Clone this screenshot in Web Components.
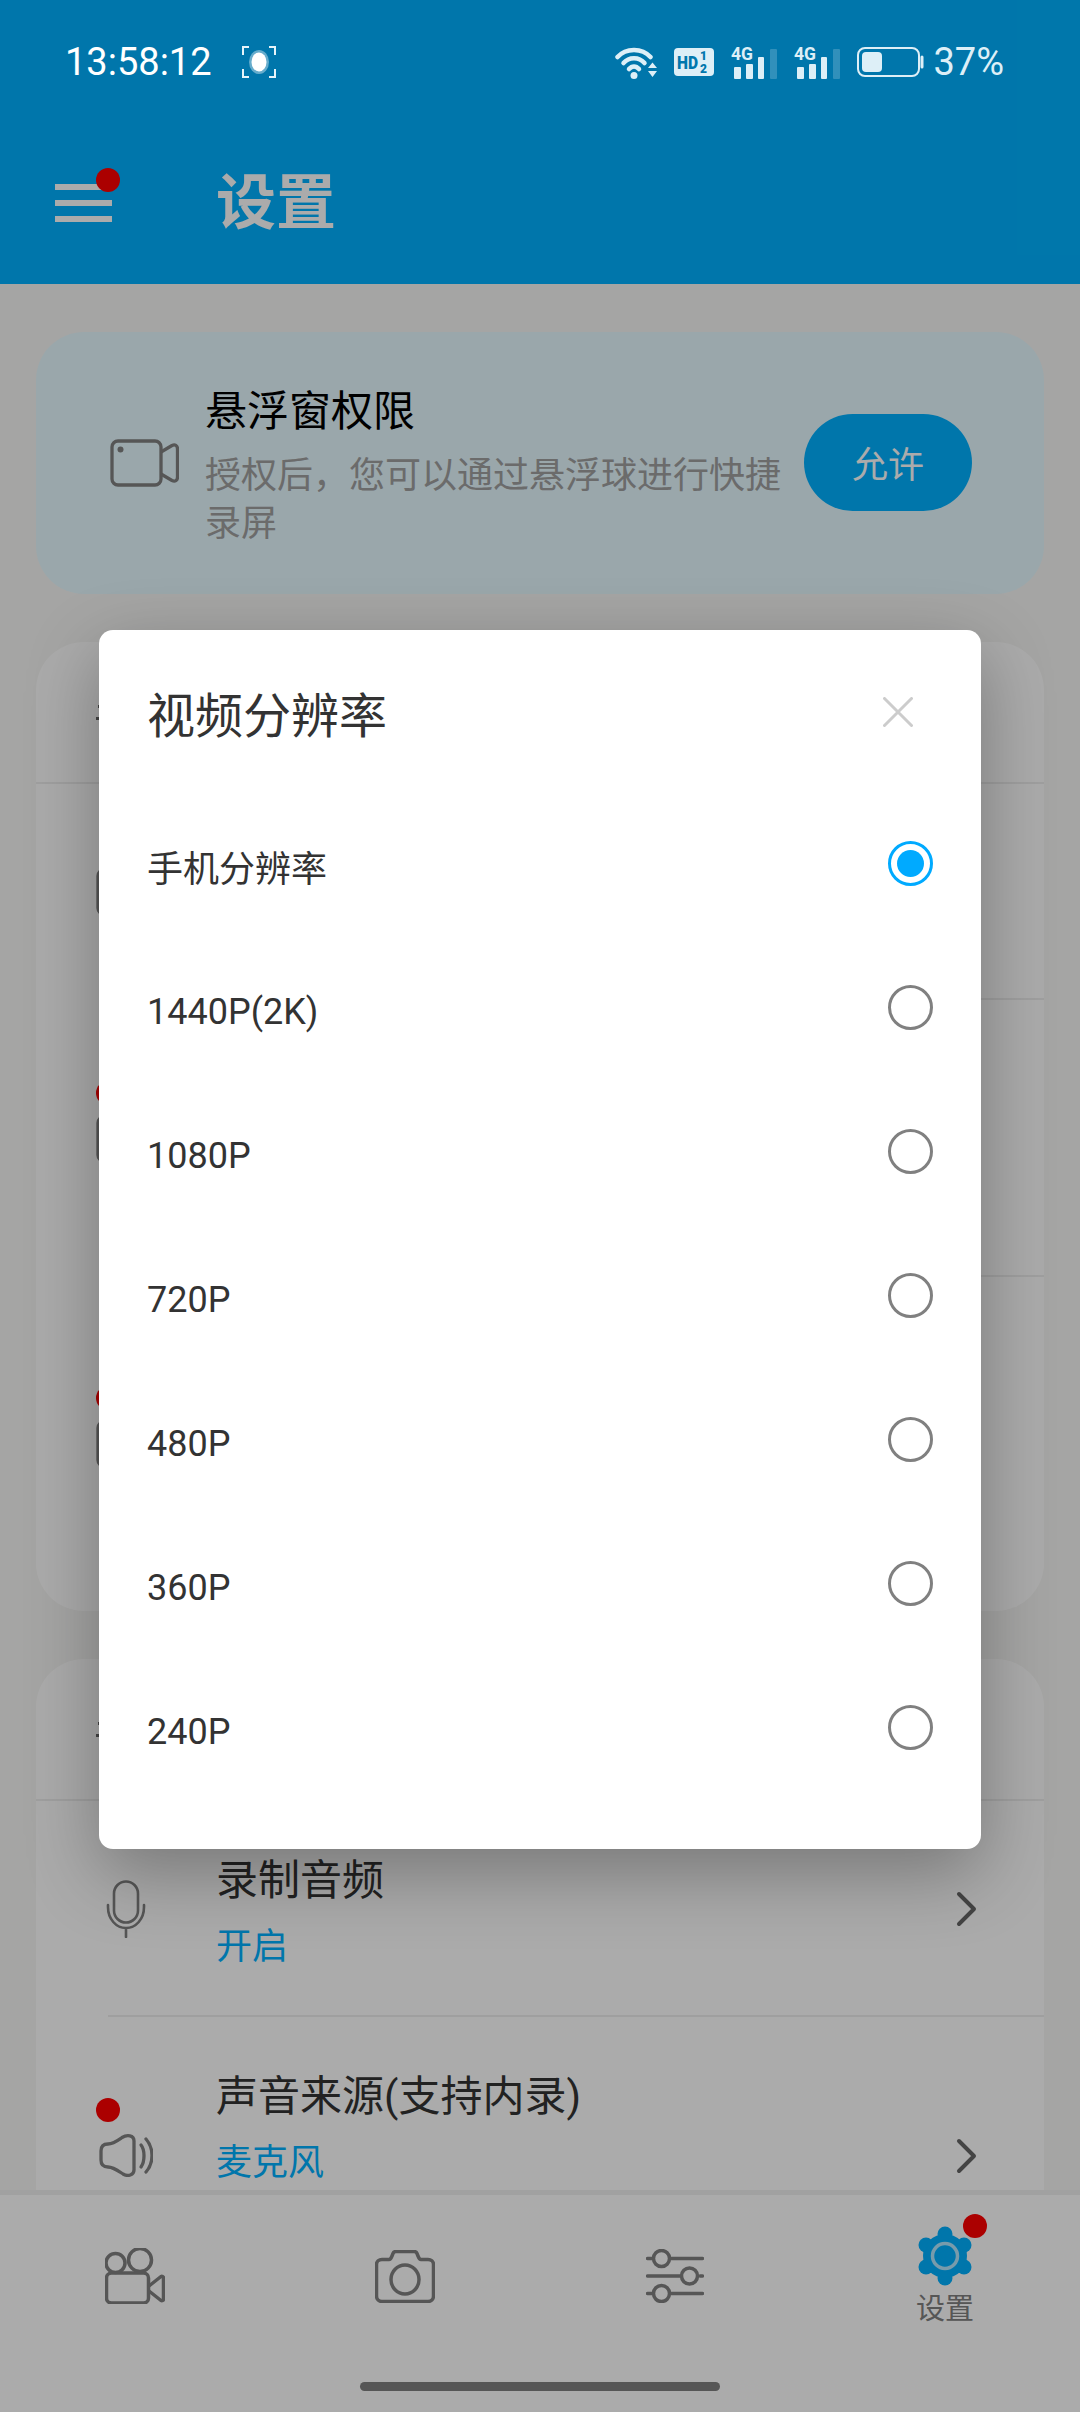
<!DOCTYPE html>
<html lang="zh">
<head>
<meta charset="utf-8">
<title>设置</title>
<style>
  html, body { margin: 0; padding: 0; background: #f7f7f5; }
  body { font-family: Roboto, "Noto Sans CJK SC", sans-serif; }
</style>
</head>
<body>
<app-screen>
  <status-bar slot="status"></status-bar>
  <app-bar slot="bar" title="设置"></app-bar>

  <float-banner slot="main" title="悬浮窗权限" action="允许">授权后&#xFF0C;您可以通过悬浮球进行快捷录屏</float-banner>

  <settings-card slot="main">
    <setting-row icon="film" height="216"></setting-row>
    <setting-row icon="film" height="277" dot></setting-row>
    <setting-row icon="film" height="334" dot last></setting-row>
  </settings-card>

  <settings-card slot="main">
    <setting-row icon="mic" height="216" label="录制音频" value="开启"></setting-row>
    <setting-row icon="speaker" height="277" label="声音来源(支持内录)" value="麦克风" dot last></setting-row>
  </settings-card>

  <bottom-nav slot="nav"></bottom-nav>

  <radio-dialog slot="modal" title="视频分辨率">
    <radio-row checked>手机分辨率</radio-row>
    <radio-row>1440P(2K)</radio-row>
    <radio-row>1080P</radio-row>
    <radio-row>720P</radio-row>
    <radio-row>480P</radio-row>
    <radio-row>360P</radio-row>
    <radio-row>240P</radio-row>
  </radio-dialog>
</app-screen>

<script>
const CJK = 'Roboto, "Noto Sans CJK SC", sans-serif';

class AppScreen extends HTMLElement {
  constructor() {
    super();
    this.attachShadow({ mode: 'open' });
    this.shadowRoot.innerHTML = `
      <style>
        :host { display: block; position: relative; width: 1080px; height: 2412px; overflow: hidden; background: #f7f7f5; font-family: ${CJK}; }
        .page { display: flex; flex-direction: column; height: 100%; }
        .top { background: #00b1ff; height: 284px; flex: none; }
        main { flex: 1; min-height: 0; overflow: hidden; display: flex; flex-direction: column; gap: 48px; padding: 48px 36px 0; }
        .scrim { position: absolute; inset: 0; z-index: 1; background: rgba(0,0,0,.33); }
        .modal { position: absolute; inset: 0; z-index: 2; display: flex; justify-content: center; align-items: flex-start; padding-top: 630px; box-sizing: border-box; pointer-events: none; }
        .status { position: relative; z-index: 3; display: block; }
      </style>
      <div class="page">
        <div class="top">
          <div class="status"><slot name="status"></slot></div>
          <slot name="bar"></slot>
        </div>
        <main><slot name="main"></slot></main>
        <slot name="nav"></slot>
      </div>
      <div class="scrim"></div>
      <div class="modal"><slot name="modal"></slot></div>
    `;
  }
}
customElements.define('app-screen', AppScreen);

class StatusBar extends HTMLElement {
  constructor() {
    super();
    this.attachShadow({ mode: 'open' });
    const signal = `
      <svg class="sig" width="46" height="37" viewBox="0 -4 46 37">
        <text x="0" y="14" font-family="Roboto" font-size="19" font-weight="700" fill="#ddeff7" textLength="22" lengthAdjust="spacingAndGlyphs">4G</text>
        <rect x="3" y="21" width="7" height="12" rx="1" fill="#ddeff7"/>
        <rect x="15" y="18" width="7" height="15" rx="1" fill="#ddeff7"/>
        <rect x="27" y="11" width="6" height="22" rx="1" fill="#ddeff7"/>
        <rect x="39" y="3" width="7" height="30" rx="1" fill="#ddeff7" opacity=".22"/>
      </svg>`;
    this.shadowRoot.innerHTML = `
      <style>
        :host { display: flex; align-items: center; height: 124px; padding: 0 76px 0 65px; box-sizing: border-box; color: #fff; font-family: Roboto, sans-serif; }
        .time { font-size: 38px; }
        .rec { margin-left: 30px; display: block; }
        .right { margin-left: auto; display: flex; align-items: center; gap: 17px; color: #ddeff7; }
        .pct { font-size: 38px; margin-left: -8px; }
        svg { display: block; }
        .sig { margin-top: -4px; }
      </style>
      <span class="time">13:58:12</span>
      <svg class="rec" width="34" height="32" viewBox="0 0 34 32" fill="none">
        <path d="M1 9V1h6M27 1h6v8M33 23v8h-6M7 31H1v-8" stroke="#e6f4fa" stroke-width="2"/>
        <ellipse cx="17" cy="16" rx="10" ry="12" fill="#fff" opacity=".4"/>
        <ellipse cx="17" cy="16" rx="7.500" ry="9.500" fill="#fff"/>
      </svg>
      <div class="right">
        <svg width="42" height="33" viewBox="0 0 42 33" fill="none" stroke="#ddeff7" stroke-linecap="round">
          <path d="M2.500 11C11 1.500 27 1.500 35.500 11" stroke-width="4.500"/>
          <path d="M8.500 17C14 10.500 24 10.500 29.500 17" stroke-width="4.500"/>
          <path d="M14 23C17 19.500 21 19.500 24 23" stroke-width="4.500"/>
          <circle cx="19" cy="29.500" r="3.500" fill="#ddeff7" stroke="none"/>
          <path d="M33 22h9l-4.500-5.500zM33 25h9l-4.500 6z" fill="#ddeff7" stroke="none"/>
        </svg>
        <svg width="40" height="28" viewBox="0 0 40 28">
          <rect width="40" height="28" rx="4" fill="#ddeff7"/>
          <text x="3" y="21" font-family="Roboto" font-size="19" font-weight="900" fill="#0077ad" textLength="21" lengthAdjust="spacingAndGlyphs">HD</text>
          <text x="26" y="12" font-family="Roboto" font-size="12" font-weight="900" fill="#0077ad">1</text>
          <text x="26" y="25" font-family="Roboto" font-size="12" font-weight="900" fill="#0077ad">2</text>
        </svg>
        ${signal}
        ${signal}
        <svg width="67" height="30" viewBox="0 0 67 30" fill="none">
          <rect x="1" y="1" width="61" height="28" rx="7" stroke="#ddeff7" stroke-width="2"/>
          <rect x="5" y="5" width="20" height="20" rx="4" fill="#ddeff7"/>
          <path d="M65 10v10" stroke="#ddeff7" stroke-width="3" stroke-linecap="round"/>
        </svg>
        <span class="pct">37%</span>
      </div>
    `;
  }
}
customElements.define('status-bar', StatusBar);

class AppBar extends HTMLElement {
  constructor() {
    super();
    this.attachShadow({ mode: 'open' });
    this.shadowRoot.innerHTML = `
      <style>
        :host { display: flex; align-items: center; height: 160px; padding-left: 55px; }
        .menu { position: relative; width: 57px; display: flex; flex-direction: column; gap: 10px; margin-top: -2px; }
        .menu i { display: block; height: 6px; background: #fff; }
        .dot { position: absolute; right: -8px; top: -16px; width: 24px; height: 24px; border-radius: 50%; background: #ff0000; }
        h1 { margin: 0 0 0 104px; font-size: 60px; line-height: 1; font-weight: 700; color: #fff; font-family: ${CJK}; }
      </style>
      <div class="menu"><i></i><i></i><i></i><span class="dot"></span></div>
      <h1>${this.getAttribute('title')}</h1>
    `;
  }
}
customElements.define('app-bar', AppBar);

class FloatBanner extends HTMLElement {
  constructor() {
    super();
    this.attachShadow({ mode: 'open' });
    this.shadowRoot.innerHTML = `
      <style>
        :host { display: flex; flex: none; align-items: center; height: 262px; box-sizing: border-box; padding: 0 72px 0 74px; background: #e6f9ff; border-radius: 48px; }
        svg { flex: none; }
        .text { width: 584px; margin-left: 26px; flex: none; padding-top: 6px; }
        .t { font-size: 42px; line-height: 56px; color: #000; }
        .s { font-size: 36px; line-height: 48px; color: #a0a0a0; margin-top: 12px; }
        button { flex: none; margin-left: auto; margin-top: -2px; width: 168px; height: 97px; border: 0; border-radius: 49px; background: #00b1ff; color: #fff; font: 36px ${CJK}; padding: 0; }
      </style>
      <svg width="69" height="48" viewBox="0 0 69 48" fill="none" stroke="#808080" stroke-width="3.300" stroke-linejoin="round">
        <rect x="2" y="2" width="49" height="44" rx="6"/>
        <path d="M51 13 62 6.500C65 5 67.500 6.500 67.500 10V38C67.500 41.500 65 43 62 41.500L51 35"/>
        <circle cx="10.500" cy="10.500" r="3" fill="#808080" stroke="none"/>
      </svg>
      <div class="text">
        <div class="t">${this.getAttribute('title')}</div>
        <div class="s"><slot></slot></div>
      </div>
      <button>${this.getAttribute('action')}</button>
    `;
  }
}
customElements.define('float-banner', FloatBanner);

class SettingsCard extends HTMLElement {
  constructor() {
    super();
    this.attachShadow({ mode: 'open' });
    this.shadowRoot.innerHTML = `
      <style>
        :host { display: block; flex: none; background: #fff; border-radius: 48px; overflow: hidden; }
        .head { height: 142px; box-sizing: border-box; border-bottom: 2px solid #ededed; padding: 63px 0 0 62px; }
        .head i { display: block; background: #666; }
        .a { width: 2px; height: 3px; }
        .b { width: 4px; height: 3px; margin: 9px 0 0 -2px; }
      </style>
      <div class="head"><i class="a"></i><i class="b"></i></div>
      <slot></slot>
    `;
  }
}
customElements.define('settings-card', SettingsCard);

const ROW_ICONS = {
  film: `<svg width="60" height="48" viewBox="0 0 60 48" fill="none" stroke="#808080" stroke-width="3.300"><rect x="2" y="2" width="56" height="44" rx="6"/></svg>`,
  mic: `<svg width="40" height="58" viewBox="0 0 40 58" fill="none" stroke="#808080" stroke-width="2.600" stroke-linecap="round">
      <rect x="8" y="1.500" width="24" height="41" rx="12"/>
      <path d="M2 25V27C2 39 10 48 20 48S38 39 38 27V25M20 48V57"/>
    </svg>`,
  speaker: `<svg width="54" height="43" viewBox="0 0 54 43" fill="none" stroke="#808080" stroke-width="3.300" stroke-linecap="round" stroke-linejoin="round">
      <path d="M2 17C2 12 5 10 9 10C14 10 18 7 23 3.500C28 .5 35 1 35 7V36C35 41 29 43 24 40C18 36 14 33 9 33C5 33 2 31 2 26Z"/>
      <path d="M42 11C46 16 46 27 42 33"/>
      <path d="M47 5C55 14 55 29 47 38"/>
    </svg>`
};

class SettingRow extends HTMLElement {
  constructor() {
    super();
    this.attachShadow({ mode: 'open' });
    const label = this.getAttribute('label');
    const value = this.getAttribute('value');
    const dot = this.hasAttribute('dot');
    const name = this.getAttribute('icon');
    this.shadowRoot.innerHTML = `
      <style>
        :host { display: block; height: ${this.getAttribute('height')}px; box-sizing: border-box; position: relative; }
        .line { position: absolute; left: 72px; right: 0; bottom: 0; height: 2px; background: #ededed; }
        .wrap { display: flex; align-items: center; height: 100%; padding-right: 67px; box-sizing: border-box; }
        .ico { position: relative; flex: none; width: 180px; height: 60px; display: flex; align-items: center; justify-content: flex-start; padding-left: ${name === 'speaker' ? 63 : name === 'mic' ? 70 : 60}px; box-sizing: border-box; }
        .dot { position: absolute; left: 60px; top: -28px; width: 24px; height: 24px; border-radius: 50%; background: #ff0000; }
        .txt { flex: 1; align-self: flex-start; padding-top: 56px; }
        .l { font-size: 42px; line-height: 48px; color: #333; }
        .v { font-size: 36px; line-height: 48px; color: #00b1ff; margin-top: 18px; }
        svg.chev { flex: none; display: block; }
      </style>
      <div class="wrap">
        <div class="ico">${ROW_ICONS[name]}${dot ? '<span class="dot"></span>' : ''}</div>
        <div class="txt">${label ? `<div class="l">${label}</div><div class="v">${value}</div>` : ''}</div>
        ${label ? `<svg class="chev" width="21" height="36" viewBox="0 0 21 36" fill="none" stroke="#666" stroke-width="4" stroke-linecap="round" stroke-linejoin="round"><path d="M3 3 18 18 3 33"/></svg>` : ''}
      </div>
      ${this.hasAttribute('last') ? '' : '<div class="line"></div>'}
    `;
  }
}
customElements.define('setting-row', SettingRow);

class BottomNav extends HTMLElement {
  constructor() {
    super();
    this.attachShadow({ mode: 'open' });
    this.shadowRoot.innerHTML = `
      <style>
        :host { display: block; flex: none; position: relative; height: 217px; background: #ffffff; box-shadow: 0 -5px 0 #f0f0f0; font-family: ${CJK}; }
        .tabs { display: grid; grid-template-columns: repeat(4, 270px); height: 162px; }
        .tab { display: flex; flex-direction: column; align-items: center; justify-content: center; position: relative; }
        svg { display: block; }
        .gear { position: relative; }
        .dot { position: absolute; left: 46px; top: -12px; width: 24px; height: 24px; border-radius: 50%; background: #ff0000; }
        .lab { font-size: 29px; line-height: 34px; color: #808080; margin-top: 6px; }
        .home { width: 360px; height: 9px; border-radius: 5px; background: #808080; margin: 25px auto 0; }
      </style>
      <div class="tabs">
        <div class="tab">
          <svg width="60" height="56" viewBox="0 0 60 56" fill="none" stroke="#808080" stroke-width="3.500">
            <circle cx="10.500" cy="15" r="9.500"/>
            <circle cx="35" cy="12" r="11.500"/>
            <rect x="1.500" y="25" width="42" height="30" rx="5"/>
            <path d="M44 38 56 28.500C57 28 58.500 28.500 58.500 30V51C58.500 52.500 57 53 56 52.500L44 43" stroke-linejoin="round"/>
          </svg>
        </div>
        <div class="tab">
          <svg width="60" height="53" viewBox="0 0 60 53" fill="none" stroke="#808080" stroke-width="3.500" stroke-linejoin="round">
            <path d="M7 9.500H14C15.500 9.500 16 8.500 17 6L18 3.500C18.500 2 19.500 1.500 21 1.500H39C40.500 1.500 41.500 2 42 3.500L43 6C44 8.500 44.500 9.500 46 9.500H53C56 9.500 58.500 11.500 58.500 14.500V46C58.500 49.500 56 51.500 53 51.500H7C4 51.500 1.500 49.500 1.500 46V14.500C1.500 11.500 4 9.500 7 9.500Z"/>
            <ellipse cx="30" cy="29.500" rx="14" ry="14.500"/>
          </svg>
        </div>
        <div class="tab">
          <svg width="58" height="54" viewBox="0 0 58 54" fill="none" stroke="#808080" stroke-width="3.500" stroke-linecap="round">
            <path d="M1.500 9.500H6M25 9.500H56.500M1.500 27H34M54 27H56.500M1.500 44.500H6M25 44.500H56.500"/>
            <circle cx="15.500" cy="9.500" r="8"/>
            <circle cx="43.500" cy="27" r="8"/>
            <circle cx="15.500" cy="44.500" r="8"/>
          </svg>
        </div>
        <div class="tab">
          <div class="gear">
            <svg width="56" height="60" viewBox="0 0 56 60">
              <g fill="#00b1ff">
                <circle cx="28" cy="30" r="22"/>
                <circle cx="28" cy="8" r="7.500"/>
                <circle cx="28" cy="52" r="7.500"/>
                <circle cx="9" cy="19" r="7.500"/>
                <circle cx="47" cy="19" r="7.500"/>
                <circle cx="9" cy="41" r="7.500"/>
                <circle cx="47" cy="41" r="7.500"/>
              </g>
              <circle cx="28" cy="30" r="12.500" fill="none" stroke="#ffffff" stroke-opacity=".7" stroke-width="3.500"/>
            </svg>
            <span class="dot"></span>
          </div>
          <div class="lab">设置</div>
        </div>
      </div>
      <div class="home"></div>
    `;
  }
}
customElements.define('bottom-nav', BottomNav);

class RadioDialog extends HTMLElement {
  constructor() {
    super();
    this.attachShadow({ mode: 'open' });
    this.shadowRoot.innerHTML = `
      <style>
        :host { display: block; width: 882px; box-sizing: border-box; padding: 48px 0; background: #fff; border-radius: 14px; box-shadow: 0 24px 72px rgba(0,0,0,.3); pointer-events: auto; }
        header { display: flex; align-items: center; justify-content: space-between; height: 72px; padding: 0 68px 0 48px; margin-bottom: 43px; }
        h2 { margin: 6px 0 0; font-size: 48px; font-weight: 400; line-height: 72px; color: #333; font-family: ${CJK}; }
        svg { display: block; margin-top: -4px; }
      </style>
      <header>
        <h2>${this.getAttribute('title')}</h2>
        <svg width="30" height="30" viewBox="0 0 30 30" stroke="#cccccc" stroke-width="3" stroke-linecap="round"><path d="M1.500 1.500 28.500 28.500M28.500 1.500 1.500 28.500"/></svg>
      </header>
      <slot></slot>
    `;
  }
}
customElements.define('radio-dialog', RadioDialog);

class RadioRow extends HTMLElement {
  constructor() {
    super();
    this.attachShadow({ mode: 'open' });
    const on = this.hasAttribute('checked');
    this.shadowRoot.innerHTML = `
      <style>
        :host { display: flex; align-items: center; justify-content: space-between; height: 144px; padding: 0 48px; font-size: 36px; color: #333; font-family: ${CJK}; }
        span { margin-top: 6px; }
        :host([checked]) span { margin-top: 2px; }
        svg { display: block; margin-top: -3px; }
      </style>
      <span><slot></slot></span>
      <svg width="45" height="45" viewBox="0 0 45 45" fill="none">
        <circle cx="22.500" cy="22.500" r="21" stroke="${on ? '#00aaff' : '#808080'}" stroke-width="3"/>
        ${on ? '<circle cx="22.500" cy="22.500" r="13.500" fill="#00aaff"/>' : ''}
      </svg>
    `;
  }
}
customElements.define('radio-row', RadioRow);
</script>
</body>
</html>
